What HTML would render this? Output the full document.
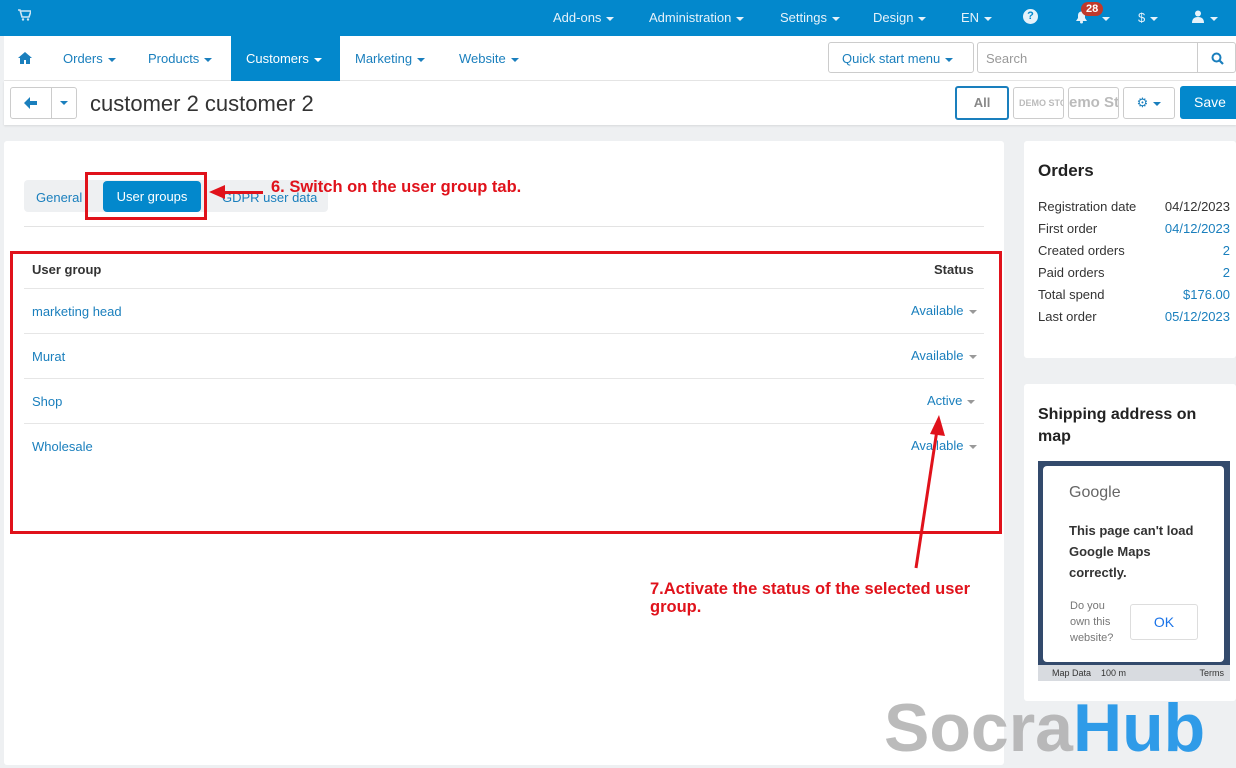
<!DOCTYPE html>
<html><head><meta charset="utf-8">
<style>
*{box-sizing:border-box;margin:0;padding:0}
body{width:1236px;height:765px;overflow:hidden;background:#eef0f2;font-family:"Liberation Sans",sans-serif;font-size:13px;color:#333;position:relative}
.a{position:absolute}
.top{left:0;top:0;width:1236px;height:36px;background:#0388cc;color:#e6f2fa;font-size:13px}
.top span{position:absolute;top:10px}
.car{display:inline-block;width:0;height:0;border-left:4px solid transparent;border-right:4px solid transparent;border-top:4px solid currentColor;vertical-align:middle;margin-left:5px}
.nav{left:4px;top:36px;width:1232px;height:45px;background:#fff;border-bottom:1px solid #e6e6e6}
.nav span{position:absolute;top:15px;color:#1a7fbd}
.bar{left:4px;top:81px;width:1232px;height:44px;background:#fff;box-shadow:0 1px 2px rgba(0,0,0,.1)}
.btn{position:absolute;border:1px solid #ccc;border-radius:3px;background:#fff}
.card{background:#fff;border-radius:3px}
.link{color:#1a7fbd}
.red{color:#e0121b;font-weight:bold;font-size:16.5px}
</style></head><body>
<div class="a top">
<svg class="a" style="left:18px;top:9px" width="13" height="12" viewBox="0 0 13 12"><path d="M0 1h2l2 7h7l2-6H3" fill="none" stroke="#cfe6f4" stroke-width="1.6"/><circle cx="5" cy="10.5" r="1.2" fill="#cfe6f4"/><circle cx="10" cy="10.5" r="1.2" fill="#cfe6f4"/></svg>
<span style="left:553px">Add-ons<i class="car"></i></span>
<span style="left:649px">Administration<i class="car"></i></span>
<span style="left:780px">Settings<i class="car"></i></span>
<span style="left:873px">Design<i class="car"></i></span>
<span style="left:961px">EN<i class="car"></i></span>
<span style="left:1023px;top:9px;width:15px;height:15px;border-radius:50%;background:#e6f2fa;color:#0388cc;font-weight:bold;font-size:11px;text-align:center;line-height:15px">?</span>
<svg class="a" style="left:1074px;top:9px" width="15" height="15" viewBox="0 0 15 15"><path d="M2 12h11l-2-3V6a3.5 3.5 0 0 0-7 0v3z" fill="#e6f2fa"/><circle cx="7.5" cy="13" r="1.5" fill="#e6f2fa"/></svg>
<span style="left:1081px;top:2px;background:#c0392b;color:#fff;font-size:11px;font-weight:bold;border-radius:8px;padding:0 5px;line-height:14px">28</span>
<span style="left:1097px"><i class="car"></i></span>
<span style="left:1138px">$<i class="car"></i></span>
<svg class="a" style="left:1192px;top:10px" width="12" height="13" viewBox="0 0 12 13"><circle cx="6" cy="3.5" r="3" fill="#e6f2fa"/><path d="M0 13c0-4 2-6 6-6s6 2 6 6z" fill="#e6f2fa"/></svg>
<span style="left:1205px"><i class="car"></i></span>
</div>
<div class="a nav">
<svg class="a" style="left:14px;top:16px" width="14" height="12" viewBox="0 0 14 12"><path d="M7 0L0 6h2v6h4V8h2v4h4V6h2z" fill="#1a7fbd"/></svg>
<span style="left:59px">Orders<i class="car"></i></span>
<span style="left:144px">Products<i class="car"></i></span>
<div style="position:absolute;left:227px;top:0;width:109px;height:45px;background:#0388cc"></div>
<span style="left:242px;color:#fff">Customers<i class="car"></i></span>
<span style="left:351px">Marketing<i class="car"></i></span>
<span style="left:455px">Website<i class="car"></i></span>
<div class="btn" style="left:824px;top:6px;width:146px;height:31px;color:#1a7fbd;padding:8px 13px">Quick start menu<i class="car"></i></div>
<div class="btn" style="left:973px;top:6px;width:259px;height:31px;color:#999;padding:8px 8px">Search</div>
<div style="position:absolute;left:1193px;top:7px;width:1px;height:29px;background:#ccc"></div>
<svg class="a" style="left:1207px;top:16px" width="13" height="13" viewBox="0 0 13 13"><circle cx="5.5" cy="5.5" r="4" fill="none" stroke="#1a7fbd" stroke-width="2"/><path d="M8.5 8.5l3.5 3.5" stroke="#1a7fbd" stroke-width="2.2"/></svg>
</div>
<div class="a bar">
<div class="btn" style="left:6px;top:6px;width:67px;height:32px"></div>
<div style="position:absolute;left:47px;top:7px;width:1px;height:30px;background:#ccc"></div>
<svg class="a" style="left:20px;top:16px" width="13" height="12" viewBox="0 0 13 12"><path d="M6 0L0 6l6 6V8h7V4H6z" fill="#1a7fbd"/></svg>
<span class="a" style="left:56px;top:13px;color:#1a7fbd"><i class="car" style="margin:0"></i></span>
<span class="a" style="left:86px;top:10px;font-size:22px;color:#333">customer 2 customer 2</span>
<div class="btn" style="left:951px;top:5px;width:54px;height:34px;border:2px solid #1a7fbd;color:#888;font-weight:bold;text-align:center;line-height:30px">All</div>
<div class="btn" style="left:1009px;top:6px;width:51px;height:32px;color:#bbb;font-size:9px;font-weight:bold;line-height:30px;padding-left:5px;overflow:hidden;white-space:nowrap">DEMO STO</div>
<div class="btn" style="left:1064px;top:6px;width:51px;height:32px;color:#bbb;font-size:15px;font-weight:bold;line-height:30px;overflow:hidden;white-space:nowrap">emo Sto</div>
<div class="btn" style="left:1119px;top:6px;width:52px;height:32px;color:#1a7fbd;text-align:center;line-height:30px">&#9881;<i class="car"></i></div>
<div style="position:absolute;left:1176px;top:5px;width:60px;height:33px;background:#0388cc;border-radius:3px;color:#fff;text-align:center;line-height:33px;font-size:14px">Save</div>
</div>

<div class="a card" style="left:4px;top:141px;width:1000px;height:624px"></div>
<div class="a" style="left:24px;top:180px;width:304px;height:32px;background:#eef0f2;border-radius:4px"></div>
<span class="a link" style="left:36px;top:190px">General</span>
<span class="a link" style="left:222px;top:190px">GDPR user data</span>
<div class="a" style="left:103px;top:181px;width:98px;height:31px;background:#0388cc;border-radius:4px;color:#fff;text-align:center;line-height:31px">User groups</div>
<div class="a" style="left:85px;top:172px;width:122px;height:48px;border:3px solid #e0121b"></div>
<div class="a" style="left:225px;top:191px;width:38px;height:3px;background:#e0121b"></div>
<div class="a" style="left:209px;top:185px;width:0;height:0;border-top:7px solid transparent;border-bottom:7px solid transparent;border-right:16px solid #e0121b"></div>
<span class="a red" style="left:271px;top:178px">6. Switch on the user group tab.</span>
<div class="a" style="left:24px;top:226px;width:960px;height:1px;background:#e3e3e3"></div>

<div class="a" style="left:10px;top:251px;width:992px;height:283px;border:3px solid #e0121b"></div>
<span class="a" style="left:32px;top:262px;font-weight:bold">User group</span>
<span class="a" style="left:934px;top:262px;font-weight:bold">Status</span>
<div class="a" style="left:24px;top:288px;width:960px;height:1px;background:#e6e6e6"></div>
<span class="a link" style="left:32px;top:304px">marketing head</span><span class="a link" style="left:911px;top:303px">Available<i class="car" style="border-top-color:#999"></i></span>
<div class="a" style="left:24px;top:333px;width:960px;height:1px;background:#e6e6e6"></div>
<span class="a link" style="left:32px;top:349px">Murat</span><span class="a link" style="left:911px;top:348px">Available<i class="car" style="border-top-color:#999"></i></span>
<div class="a" style="left:24px;top:378px;width:960px;height:1px;background:#e6e6e6"></div>
<span class="a link" style="left:32px;top:394px">Shop</span><span class="a link" style="left:927px;top:393px">Active<i class="car" style="border-top-color:#999"></i></span>
<div class="a" style="left:24px;top:423px;width:960px;height:1px;background:#e6e6e6"></div>
<span class="a link" style="left:32px;top:439px">Wholesale</span><span class="a link" style="left:911px;top:438px">Available<i class="car" style="border-top-color:#999"></i></span>

<svg class="a" style="left:900px;top:410px" width="60" height="165"><line x1="16" y1="158" x2="37" y2="20" stroke="#e0121b" stroke-width="3"/><polygon points="39,5 30,24 45,26" fill="#e0121b"/></svg>
<span class="a red" style="left:650px;top:580px;line-height:18px">7.Activate the status of the selected user<br>group.</span>

<div class="a card" style="left:1024px;top:141px;width:212px;height:217px"></div>
<span class="a" style="left:1038px;top:161px;font-size:17px;font-weight:bold;color:#222">Orders</span>
<div class="a" style="left:1038px;top:196px;width:192px;line-height:22px">
<div>Registration date<span style="float:right">04/12/2023</span></div>
<div>First order<span class="link" style="float:right">04/12/2023</span></div>
<div>Created orders<span class="link" style="float:right">2</span></div>
<div>Paid orders<span class="link" style="float:right">2</span></div>
<div>Total spend<span class="link" style="float:right">$176.00</span></div>
<div>Last order<span class="link" style="float:right">05/12/2023</span></div>
</div>

<div class="a card" style="left:1024px;top:384px;width:212px;height:317px"></div>
<span class="a" style="left:1038px;top:404px;font-size:16px;font-weight:bold;color:#222;line-height:22px">Shipping address on<br>map</span>
<div class="a" style="left:1038px;top:461px;width:192px;height:220px;background:#334a6c"></div>
<div class="a" style="left:1038px;top:665px;width:192px;height:16px;background:#d8dbe0;font-size:9px;color:#333;line-height:16px"><span style="margin-left:14px">Map Data</span><span style="margin-left:10px">100 m</span><span style="float:right;margin-right:6px">Terms</span></div>
<div class="a" style="left:1043px;top:466px;width:181px;height:196px;background:#fff;border-radius:4px"></div>
<span class="a" style="left:1069px;top:484px;font-size:16px;color:#666">Google</span>
<span class="a" style="left:1069px;top:520px;font-size:13px;font-weight:bold;line-height:21px;color:#333">This page can't load<br>Google Maps<br>correctly.</span>
<span class="a" style="left:1070px;top:598px;font-size:11px;color:#777;line-height:16px">Do you<br>own this<br>website?</span>
<div class="a" style="left:1130px;top:604px;width:68px;height:36px;border:1px solid #ddd;border-radius:3px;color:#1a73e8;text-align:center;line-height:34px;font-size:14px">OK</div>

<div class="a" style="left:884px;top:688px;font-size:68px;font-weight:bold;line-height:80px;white-space:nowrap"><span style="color:rgba(170,170,170,.8)">Socra</span><span style="color:#2f9be8">Hub</span></div>
</body></html>
